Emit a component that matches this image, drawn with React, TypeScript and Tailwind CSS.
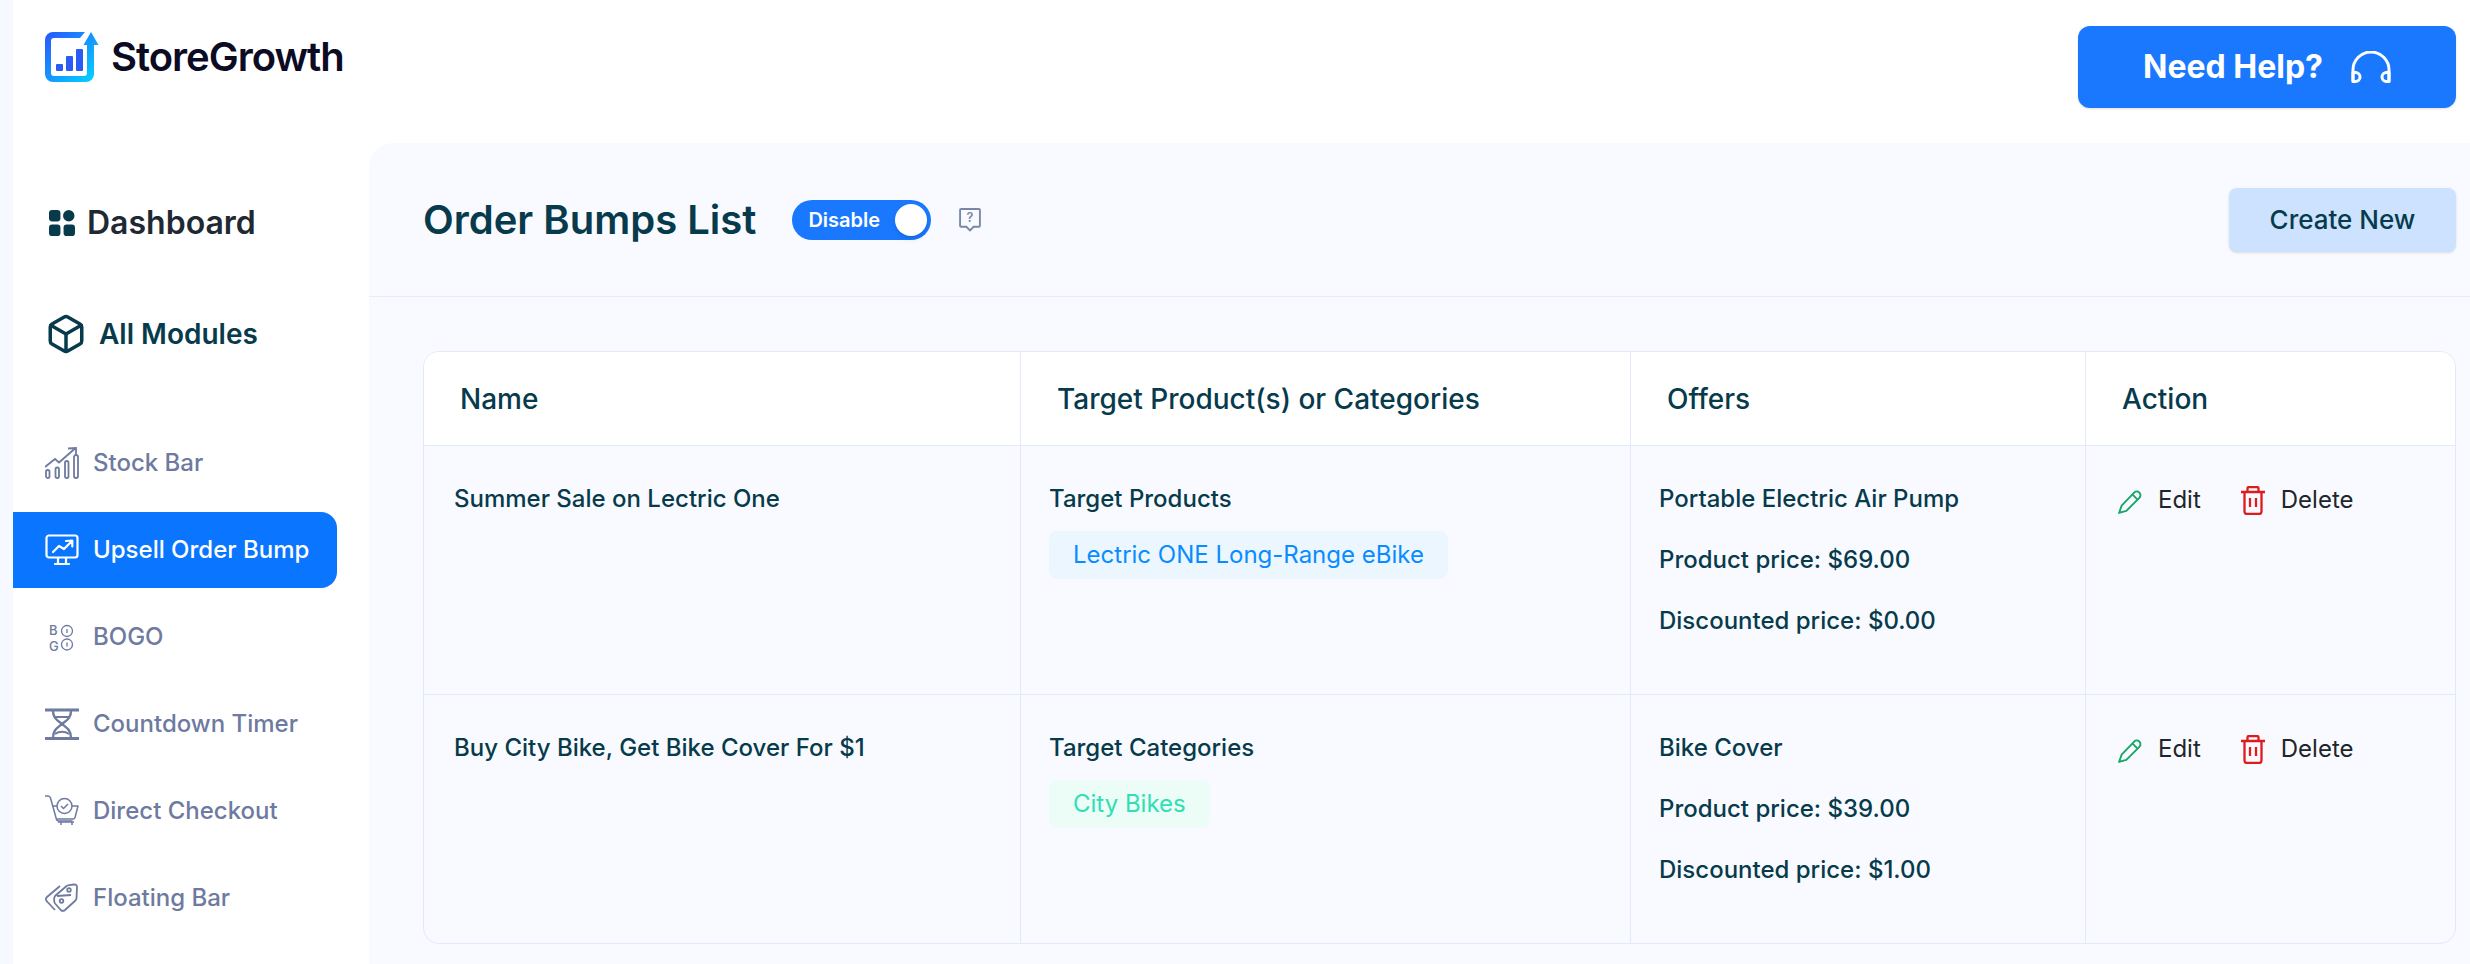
import { Box } from 'lucide-react';
import type { ReactNode } from 'react';

const Logo = () => (
  <svg viewBox="0 0 54 50" className="h-[50px] w-[54px] shrink-0">
    <defs>
      <linearGradient id="logoGrad" x1="0" y1="0" x2="1" y2="1">
        <stop offset="0" stopColor="#2a55ff" />
        <stop offset="1" stopColor="#00d9ff" />
      </linearGradient>
    </defs>
    <path
      d="M8 0h32l-5 6H9a3 3 0 0 0-3 3v32a3 3 0 0 0 3 3h30a3 3 0 0 0 3-3V13h-3.500L46 0l7.500 13H49v29a8 8 0 0 1-8 8H8a8 8 0 0 1-8-8V8a8 8 0 0 1 8-8z"
      fill="url(#logoGrad)"
    />
    <rect x="11" y="32" width="7" height="7" rx="1" fill="#2a5cf5" />
    <rect x="21" y="24" width="7" height="15" rx="1" fill="#2a5cf5" />
    <rect x="31" y="17" width="7" height="22" rx="1" fill="#2a5cf5" />
  </svg>
);

const DashIcon = () => (
  <svg viewBox="0 0 25 25" className="size-6.5 shrink-0" fill="#073b4c">
    <rect width="11" height="11" rx="3" />
    <circle cx="19" cy="5.5" r="5.5" />
    <rect y="14" width="11" height="11" rx="3" />
    <rect x="14" y="14" width="11" height="11" rx="3" />
  </svg>
);

const StockIcon = () => (
  <svg viewBox="0 0 34 32" className="h-8 w-8.5 shrink-0" fill="none" stroke="currentColor" strokeWidth="1.8">
    <rect x="1" y="23" width="3.500" height="8" rx="1.750" />
    <rect x="10.500" y="20.500" width="3.500" height="10.500" rx="1.750" />
    <rect x="20" y="14" width="3.500" height="17" rx="1.750" />
    <rect x="29" y="8" width="4" height="23" rx="2" />
    <path d="M0 20 10 12l4 3.500L30 1.500M23 1.500 31 1v7" />
  </svg>
);

const MonitorIcon = () => (
  <svg viewBox="0 0 34 32" className="h-8 w-8.5 shrink-0" fill="none" stroke="currentColor" strokeWidth="2.200" strokeLinejoin="round">
    <rect x="1.500" y="1.500" width="31" height="22" rx="2.500" />
    <path d="M13 24v5M21 24v5M10 30h14" strokeLinecap="round" />
    <path d="M8 18l6-6 5 3 8-8M21 7l6.300-.5V12.500" strokeLinecap="round" />
  </svg>
);

const BogoIcon = () => (
  <svg viewBox="0 0 34 32" className="h-8 w-8.5 shrink-0" fill="none" stroke="currentColor" strokeWidth="1.300">
    <text x="4" y="14" fontSize="13" fontFamily="Inter, sans-serif" fill="currentColor" stroke="none">B</text>
    <text x="4" y="30" fontSize="13" fontFamily="Inter, sans-serif" fill="currentColor" stroke="none">G</text>
    <circle cx="22" cy="10" r="5.500" />
    <circle cx="22" cy="23.500" r="5.500" />
    <path d="M22 8v4M22 21.500v4" />
  </svg>
);

const TimerIcon = () => (
  <svg viewBox="0 0 34 32" className="h-8 w-8.5 shrink-0" fill="none" stroke="currentColor" strokeWidth="2.400">
    <path d="M0 2h34M0 30.500h34" strokeWidth="2.800" />
    <path d="M8 3c0 7 4 9 9 13-5 4-9 6-9 14M26 3c0 7-4 9-9 13 5 4 9 6 9 14" />
    <path d="M9 9h16M10 26c4-3 10-3 14 0" strokeWidth="1.800" />
  </svg>
);

const CartIcon = () => (
  <svg viewBox="0 0 34 32" className="h-8 w-8.5 shrink-0" fill="none" stroke="currentColor" strokeWidth="1.500" strokeLinejoin="round">
    <path d="M0 1h3c1.500 0 2 .500 2.500 2l6 21.500c.3 1 1 1.500 2 1.500h14" />
    <path d="M8 11h4M27 11h6l-3 11.500c-.3 1-1 1.500-2 1.500H12" />
    <circle cx="19.500" cy="11" r="7.500" />
    <path d="M16 11l2.500 2.500 4.500-4.500" />
    <path d="M13 27h16M16 27v3M27 27v3" />
  </svg>
);

const TagIcon = () => (
  <svg viewBox="0 0 34 32" className="h-8 w-8.5 shrink-0" fill="none" stroke="currentColor" strokeWidth="1.800" strokeLinejoin="round">
    <path d="M10 14 21 4.500c1-.9 2-1.200 3-1.300L29 2.500c2-.2 3 1 3 2.500L31.500 16c0 1-.5 2-1.300 2.700L20 28c-1.500 1.200-3 1.200-4.200 0L10 21.500c-1.200-1.500-1.200-6 0-7.500z" />
    <path d="M15 4 2 15c-1.500 1.300-1.500 3 0 4.500L10 28" />
    <circle cx="24" cy="8" r="1.800" />
    <circle cx="16.500" cy="19" r="1.800" />
    <path d="M12 14 26 13" />
  </svg>
);

const EditIcon = () => (
  <svg viewBox="0 0 23 23" className="mt-2 size-6 shrink-0" fill="none" stroke="#16a765" strokeWidth="1.800" strokeLinejoin="round">
    <path d="M1 22l2.500-7L15.500 2.500a3.500 3.500 0 0 1 5 5L8 20z" />
    <path d="M14 4.500l4.500 4.500" />
  </svg>
);

const TrashIcon = () => (
  <svg viewBox="0 0 24 29" className="mt-1 h-7.25 w-6 shrink-0" fill="none" stroke="#e01b1b" strokeWidth="2.300" strokeLinejoin="round">
    <path d="M0 6h24M6.500 6V2.500A1.500 1.500 0 0 1 8 1h8a1.500 1.500 0 0 1 1.500 1.500V6M3.500 6v19.500a2.500 2.500 0 0 0 2.500 2.500h12a2.500 2.500 0 0 0 2.500-2.500V6M9 12v9M15 12v9" />
  </svg>
);

const HeadsetIcon = () => (
  <svg viewBox="0 0 40 32" className="h-8 w-10 shrink-0" fill="none" stroke="#fff" strokeWidth="3" strokeLinecap="round" strokeLinejoin="round">
    <path d="M2 30V19a18 18 0 0 1 36 0v11" />
    <path d="M2 21.500h2.500a4.500 4.500 0 0 1 0 9H2zM38 21.500h-2.500a4.500 4.500 0 0 0 0 9H38z" />
  </svg>
);

const InfoIcon = () => (
  <svg viewBox="0 0 21 23" className="h-6 w-5.5 shrink-0" fill="none" stroke="#7a86a6" strokeWidth="1.800">
    <path d="M2 1h17a1 1 0 0 1 1 1v15a1 1 0 0 1-1 1h-5l-3.500 3.500L7 18H2a1 1 0 0 1-1-1V2a1 1 0 0 1 1-1z" />
    <text x="10.500" y="13.500" textAnchor="middle" fontSize="12" fontWeight="600" fontFamily="Inter, sans-serif" fill="#7a86a6" stroke="none">?</text>
  </svg>
);

const modules: { label: string; icon: ReactNode; active?: boolean }[] = [
  { label: 'Stock Bar', icon: <StockIcon /> },
  { label: 'Upsell Order Bump', icon: <MonitorIcon />, active: true },
  { label: 'BOGO', icon: <BogoIcon /> },
  { label: 'Countdown Timer', icon: <TimerIcon /> },
  { label: 'Direct Checkout', icon: <CartIcon /> },
  { label: 'Floating Bar', icon: <TagIcon /> },
];

const rows = [
  {
    name: 'Summer Sale on Lectric One',
    target: 'Target Products',
    tag: 'Lectric ONE Long-Range eBike',
    tagClass: 'bg-[#ecf6ff] text-[#0a8cff]',
    offer: 'Portable Electric Air Pump',
    price: '$69.00',
    discount: '$0.00',
  },
  {
    name: 'Buy City Bike, Get Bike Cover For $1',
    target: 'Target Categories',
    tag: 'City Bikes',
    tagClass: 'bg-[#ecfcf7] text-[#2fdfb5]',
    offer: 'Bike Cover',
    price: '$39.00',
    discount: '$1.00',
  },
];

const headers = ['Name', 'Target Product(s) or Categories', 'Offers', 'Action'];

export default function App() {
  return (
    <div className="flex min-h-screen flex-col overflow-hidden bg-white font-['Inter',sans-serif] text-[#073b4c]">
      <header className="ml-3.25 flex h-[143px] items-start justify-between pt-6.5 pr-3.5">
        <div className="mt-1.5 flex items-center gap-3 pl-8">
          <Logo />
          <span className="text-[40px] leading-none font-semibold tracking-tight text-[#0b0b24]">StoreGrowth</span>
        </div>
        <button className="flex h-20.5 w-[378px] items-center justify-center gap-7 rounded-xl bg-[#1a78ff] text-[32px] font-bold text-white shadow-sm">
          Need Help?
          <HeadsetIcon />
        </button>
      </header>

      <div className="flex flex-1">
        <div className="-mt-[143px] w-3.25 bg-[#f6f9ff]" />
        <aside className="w-[356px] shrink-0 pt-15.5">
          <div className="flex items-center gap-3 pl-9 text-[32px] leading-9 font-semibold text-[#1f2933]">
            <DashIcon />
            Dashboard
          </div>
          <div className="mt-18 flex items-center gap-3 pl-8 text-[28px] font-semibold">
            <Box size={42} strokeWidth={2} />
            All Modules
          </div>
          <nav className="mt-17.5 mr-8 flex flex-col gap-2.75">
            {modules.map((m) => (
              <div
                key={m.label}
                className={`flex h-19 items-center gap-3.5 rounded-r-2xl pl-8 text-2xl font-medium ${
                  m.active ? 'bg-[#0a76ff] text-white' : 'text-[#6e7aa0]'
                }`}
              >
                {m.icon}
                {m.label}
              </div>
            ))}
          </nav>
        </aside>

        <main className="min-w-0 flex-1 rounded-tl-3xl bg-[#f8faff] pr-3.5 pb-5">
          <div className="-mr-3.5 flex h-[154px] items-center justify-between border-b border-[#e8ecf6] pr-3.5 pl-13.5">
            <div className="flex items-center">
              <h1 className="text-[40px] font-semibold">Order Bumps List</h1>
              <div className="ml-9 flex h-10 w-[139px] items-center justify-between rounded-full bg-[#1a78ff] pr-1 pl-4 text-xl font-semibold text-white">
                Disable
                <span className="size-8 rounded-full bg-white shadow-md" />
              </div>
              <div className="ml-7">
                <InfoIcon />
              </div>
            </div>
            <button className="h-16 w-[227px] rounded-lg bg-[#cce2fe] text-[26px] font-medium shadow-sm">
              Create New
            </button>
          </div>

          <div className="mt-13.5 ml-13.5 overflow-hidden rounded-2xl border border-[#e2e9f8]">
            <div className="grid grid-cols-[597px_610px_455px_1fr] bg-white">
              {headers.map((h, i) => (
                <div
                  key={h}
                  className={`flex h-[93px] items-center pl-9 text-[28px] font-medium ${i < 3 ? 'border-r border-[#e2e9f8]' : ''}`}
                >
                  {h}
                </div>
              ))}
            </div>
            {rows.map((r) => (
              <div key={r.name} className="grid grid-cols-[597px_610px_455px_1fr] border-t border-[#e2e9f8] text-2xl font-medium">
                <div className="border-r border-[#e2e9f8] pt-8.75 pl-7.5 leading-9">{r.name}</div>
                <div className="border-r border-[#e2e9f8] pt-8.75 pl-7">
                  <div className="leading-9">{r.target}</div>
                  <span className={`mt-3.5 inline-flex h-12 items-center rounded-lg px-6 font-normal ${r.tagClass}`}>
                    {r.tag}
                  </span>
                </div>
                <div className="flex flex-col gap-6.25 border-r border-[#e2e9f8] pt-8.75 pb-13.75 pl-7 leading-9">
                  <div>{r.offer}</div>
                  <div>Product price: {r.price}</div>
                  <div>Discounted price: {r.discount}</div>
                </div>
                <div className="flex items-start pt-9 pl-8 leading-9 font-normal text-[#212529]">
                  <EditIcon />
                  <span className="ml-4">Edit</span>
                  <span className="ml-10">
                    <TrashIcon />
                  </span>
                  <span className="ml-4">Delete</span>
                </div>
              </div>
            ))}
          </div>
        </main>
      </div>
    </div>
  );
}
